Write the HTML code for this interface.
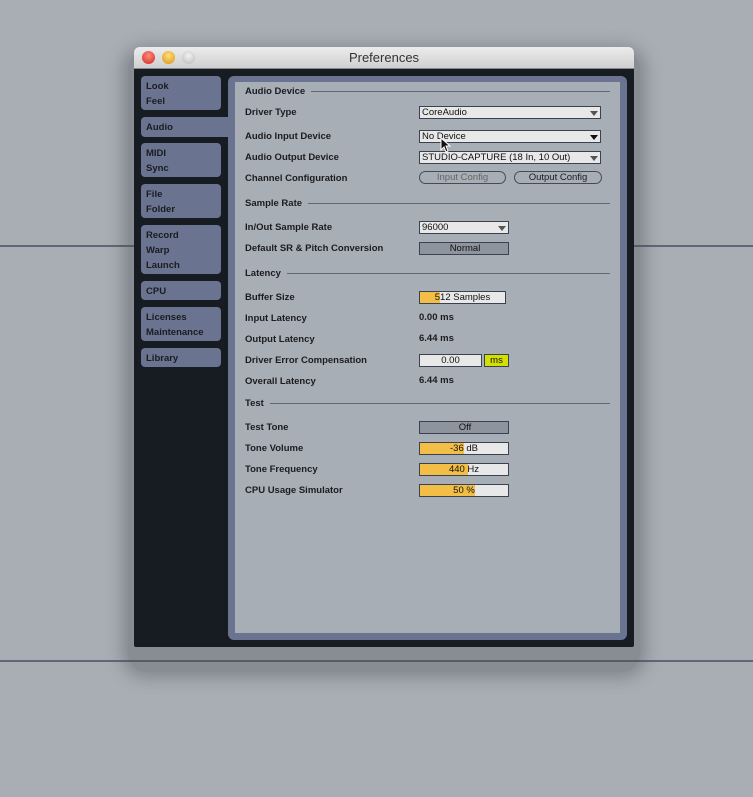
<!DOCTYPE html>
<html><head><style>
*{margin:0;padding:0;box-sizing:border-box}
body{width:753px;height:797px;background:#a9aeb4;position:relative;overflow:hidden;font-family:"Liberation Sans",sans-serif;font-size:9.5px;color:#1a1c20}
.a{position:absolute}
.hl{position:absolute;left:0;width:753px;height:2px;background:#5f6779}
.shadow{position:absolute;left:128px;top:52px;width:512px;height:620px;border-radius:18px;box-shadow:0 0 16px 6px rgba(60,65,75,.35);background:rgba(60,65,75,.3)}
.win{position:absolute;left:134px;top:47px;width:500px;height:600px;background:#171c23;border-radius:5px 5px 2px 2px;overflow:hidden}
.title{position:absolute;left:0;top:0;width:500px;height:22px;background:linear-gradient(#ececec,#d0d0d0);border-bottom:1px solid #888;text-align:center;font-size:13px;line-height:22px;color:#333}
.dot{position:absolute;top:4px;width:13px;height:13px;border-radius:50%}
.tab{position:absolute;left:7px;width:80px;background:#6a7490;border-radius:4px;font-weight:bold;padding:3px 5px;line-height:15px;font-size:9.5px}
.panel{position:absolute;left:94px;top:29px;width:399px;height:564px;background:#6a7490;border-radius:6px}
.inner{position:absolute;left:7px;top:6px;width:385px;height:551px;background:#a8aeb5}
.lb{position:absolute;left:10px;font-weight:bold}
.sec{position:absolute;left:10px;right:10px;font-weight:bold;display:flex;align-items:center}
.sec:after{content:"";flex:1;height:1px;background:#5f6779;margin-left:6px}
.box{position:absolute;left:184px;height:13px;border:1px solid #3a4150;background:#e8e8e8;font-size:9.5px;line-height:12px;padding-left:2px;color:#111}
.arr{position:absolute;right:2px;top:4px;width:0;height:0;border-left:4px solid transparent;border-right:4px solid transparent;border-top:5px solid #555}
.btn{position:absolute;height:13px;border:1px solid #444b58;border-radius:7px;text-align:center;line-height:12px;font-size:9.5px}
.fill{position:absolute;left:0;top:0;bottom:0;background:#f2be45}
.ctr{position:relative;text-align:center;display:block}
</style></head><body>
<div class="hl" style="top:245px"></div>
<div class="hl" style="top:660px"></div>
<div class="shadow"></div>
<div class="win">
 <div class="title">Preferences
  <div class="dot" style="left:8px;background:radial-gradient(circle at 50% 35%,#ff8a80,#d0281c)"></div>
  <div class="dot" style="left:28px;background:radial-gradient(circle at 50% 35%,#ffe07a,#d89015)"></div>
  <div class="dot" style="left:48px;background:radial-gradient(circle at 50% 35%,#f2f2f2,#b8b8b8)"></div>
 </div>
 <div class="tab" style="top:29px;height:34px">Look<br>Feel</div>
 <div class="tab" style="top:70px;height:20px;width:95px;border-radius:4px 0 0 4px">Audio</div>
 <div class="tab" style="top:96px;height:34px">MIDI<br>Sync</div>
 <div class="tab" style="top:137px;height:34px">File<br>Folder</div>
 <div class="tab" style="top:178px;height:49px">Record<br>Warp<br>Launch</div>
 <div class="tab" style="top:234px;height:19px">CPU</div>
 <div class="tab" style="top:260px;height:34px">Licenses<br>Maintenance</div>
 <div class="tab" style="top:301px;height:19px">Library</div>
 <div class="panel"><div class="inner">
  <div class="sec" style="top:4px">Audio Device</div>
  <div class="lb" style="top:25px">Driver Type</div>
  <div class="box" style="top:24px;width:182px">CoreAudio<span class="arr"></span></div>
  <div class="lb" style="top:49px">Audio Input Device</div>
  <div class="box" style="top:48px;width:182px">No Device<span class="arr" style="border-top-color:#111"></span></div>
  <div class="lb" style="top:70px">Audio Output Device</div>
  <div class="box" style="top:69px;width:182px">STUDIO-CAPTURE (18 In, 10 Out)<span class="arr"></span></div>
  <div class="lb" style="top:91px">Channel Configuration</div>
  <div class="btn" style="left:184px;top:89px;width:87px;color:#666;background:#a8aeb5">Input Config</div>
  <div class="btn" style="left:279px;top:89px;width:88px;background:#a8aeb5">Output Config</div>
  <div class="sec" style="top:116px">Sample Rate</div>
  <div class="lb" style="top:140px">In/Out Sample Rate</div>
  <div class="box" style="top:139px;width:90px">96000<span class="arr"></span></div>
  <div class="lb" style="top:161px">Default SR &amp; Pitch Conversion</div>
  <div class="box" style="top:160px;width:90px;background:#8d949e;text-align:center">Normal</div>
  <div class="sec" style="top:186px">Latency</div>
  <div class="lb" style="top:210px">Buffer Size</div>
  <div class="box" style="top:209px;width:87px;padding:0"><span class="fill" style="width:20px"></span><span class="ctr">512 Samples</span></div>
  <div class="lb" style="top:231px">Input Latency</div>
  <div class="lb" style="left:184px;top:230px">0.00 ms</div>
  <div class="lb" style="top:252px">Output Latency</div>
  <div class="lb" style="left:184px;top:251px">6.44 ms</div>
  <div class="lb" style="top:273px">Driver Error Compensation</div>
  <div class="box" style="top:272px;width:63px;padding:0"><span class="ctr">0.00</span></div>
  <div class="box" style="left:249px;top:272px;width:25px;background:#d4e000;padding:0;text-align:center">ms</div>
  <div class="lb" style="top:294px">Overall Latency</div>
  <div class="lb" style="left:184px;top:293px">6.44 ms</div>
  <div class="sec" style="top:316px">Test</div>
  <div class="lb" style="top:340px">Test Tone</div>
  <div class="box" style="top:339px;width:90px;background:#8d949e;text-align:center">Off</div>
  <div class="lb" style="top:361px">Tone Volume</div>
  <div class="box" style="top:360px;width:90px;padding:0"><span class="fill" style="width:44px"></span><span class="ctr">-36 dB</span></div>
  <div class="lb" style="top:382px">Tone Frequency</div>
  <div class="box" style="top:381px;width:90px;padding:0"><span class="fill" style="width:48px"></span><span class="ctr">440 Hz</span></div>
  <div class="lb" style="top:403px">CPU Usage Simulator</div>
  <div class="box" style="top:402px;width:90px;padding:0"><span class="fill" style="width:55px"></span><span class="ctr">50 %</span></div>
 </div></div>
</div>
<svg class="a" style="left:440px;top:137px" width="12" height="16" viewBox="0 0 12 16"><path d="M1 1 L1 13 L4 10 L6 15 L8 14 L6 9 L10 9 Z" fill="#111" stroke="#fff" stroke-width="1"/></svg>
</body></html>
